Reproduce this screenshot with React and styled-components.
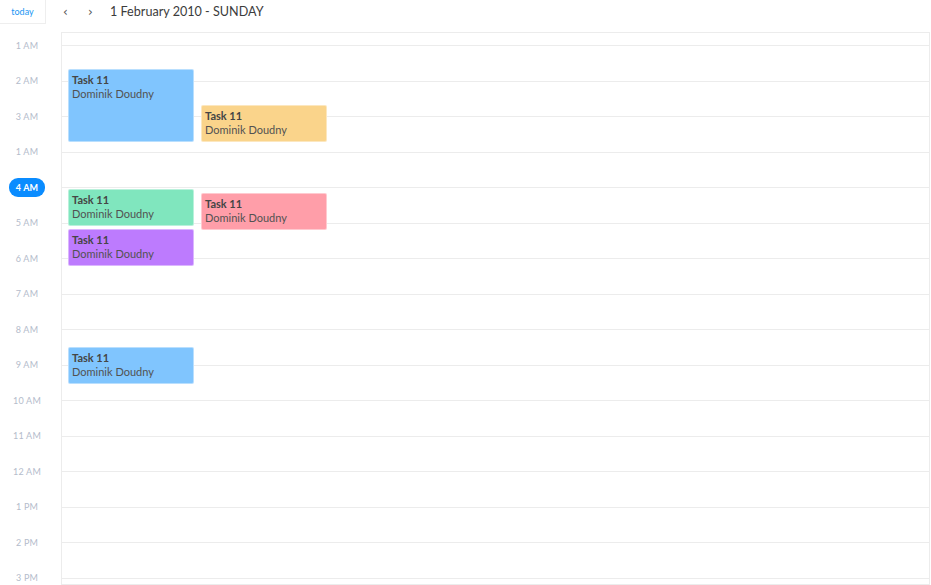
// 일간 캘린더 화면
import React from "react";
import styled, { createGlobalStyle } from "styled-components";

const GlobalStyle = createGlobalStyle`
  body {
    margin: 0;
    background: #fff;
    font-family: "Lato", "Open Sans", sans-serif;
  }
`;

const Page = styled.div`
  width: 931px;
  height: 585px;
  overflow: hidden;
  display: flex;
  flex-direction: column;
`;

const Toolbar = styled.div`
  height: 32px;
  flex: none;
  display: flex;
  align-items: flex-start;
`;

const TodayButton = styled.button`
  width: 46px;
  height: 24px;
  padding: 0;
  border: 1px solid #eeeeee;
  border-top: none;
  border-left: none;
  background: #fff;
  color: #2196f3;
  font-family: inherit;
  font-size: 9px;
  cursor: pointer;
`;

const NavButton = styled.button`
  width: 25px;
  height: 24px;
  padding: 0;
  margin-left: ${(p) => p.offset || 0}px;
  border: none;
  background: none;
  color: #555;
  font-size: 12px;
  font-family: "DejaVu Sans", sans-serif;
`;

const Title = styled.div`
  margin-left: 7px;
  line-height: 24px;
  font-size: 12.6px;
  color: #3c3c3c;
`;

const Body = styled.div`
  flex: 1;
  display: flex;
  align-items: flex-start;
`;

// 시간 라벨은 각 줄 위에 세로 가운데로 맞춘다
const TimeColumn = styled.div`
  width: 61px;
  flex: none;
  margin-top: -4.75px;
  display: flex;
  flex-direction: column;
`;

const TimeCell = styled.div`
  height: 35.5px;
  padding-right: 7px;
  display: flex;
  align-items: center;
  justify-content: center;
`;

const TimeLabel = styled.span`
  font-size: 9px;
  letter-spacing: 0.2px;
  color: ${(p) => (p.now ? "#fff" : "#b4bccb")};
  font-weight: ${(p) => (p.now ? 700 : 400)};
  background: ${(p) => (p.now ? "#0a8cff" : "transparent")};
  border-radius: 9px;
  padding: ${(p) => (p.now ? "4px 7px" : "0")};
`;

const Grid = styled.div`
  position: relative;
  width: 867px;
  height: 551px;
  border: 1px solid #ececec;
  overflow: hidden;
  display: flex;
  flex-direction: column;
`;

const Spacer = styled.div`
  height: 12px;
  flex: none;
  border-bottom: 1px solid #ececec;
`;

const HourRow = styled.div`
  height: 35.5px;
  flex: none;
  box-sizing: border-box;
  border-bottom: 1px solid #ececec;
`;

const EventCard = styled.div`
  position: absolute;
  left: ${(p) => p.left}px;
  top: ${(p) => p.top}px;
  width: 126px;
  height: ${(p) => p.height}px;
  box-sizing: border-box;
  padding: 3px 3px;
  background: ${(p) => p.color};
  border: 1px solid rgba(255, 255, 255, 0.45);
  border-radius: 2px;
  font-size: 11px;
  line-height: 14px;
`;

const EventTitle = styled.div`
  font-weight: 700;
  color: #454545;
`;

const EventName = styled.div`
  color: #525252;
`;

const hours = [
  "1 AM", "2 AM", "3 AM", "1 AM", "4 AM", "5 AM", "6 AM", "7 AM",
  "8 AM", "9 AM", "10 AM", "11 AM", "12 AM", "1 PM", "2 PM", "3 PM",
];

const events = [
  { left: 6, top: 36, height: 73, color: "#80c5fe" },
  { left: 139, top: 72, height: 37, color: "#fad48b" },
  { left: 6, top: 156, height: 37, color: "#80e6be" },
  { left: 139, top: 160, height: 37, color: "#ff9ea9" },
  { left: 6, top: 196, height: 37, color: "#bd7bfe" },
  { left: 6, top: 314, height: 37, color: "#80c5fe" },
];

const App = () => {
  return (
    <Page>
      <GlobalStyle />
      <Toolbar>
        <TodayButton>today</TodayButton>
        <NavButton offset={7}>‹</NavButton>
        <NavButton>›</NavButton>
        <Title>1 February 2010 - SUNDAY</Title>
      </Toolbar>
      <Body>
        <TimeColumn>
          {hours.map((h, i) => (
            <TimeCell key={i}>
              <TimeLabel now={i === 4}>{h}</TimeLabel>
            </TimeCell>
          ))}
        </TimeColumn>
        <Grid>
          <Spacer />
          {hours.map((h, i) => (
            <HourRow key={i} />
          ))}
          {events.map((e, i) => (
            <EventCard key={i} left={e.left} top={e.top} height={e.height} color={e.color}>
              <EventTitle>Task 11</EventTitle>
              <EventName>Dominik Doudny</EventName>
            </EventCard>
          ))}
        </Grid>
      </Body>
    </Page>
  );
};

export default App;
